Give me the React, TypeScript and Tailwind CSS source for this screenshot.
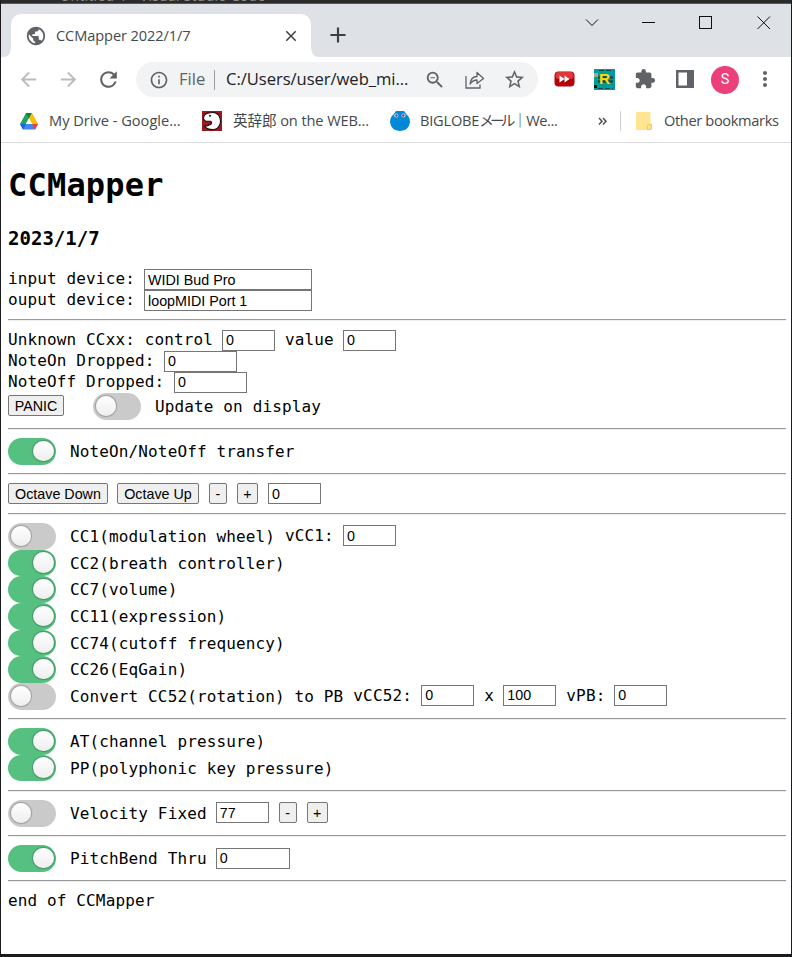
import type { ReactNode } from "react";
import {
  MdAdd,
  MdArrowBack,
  MdArrowForward,
  MdClose,
  MdExtension,
  MdInfoOutline,
  MdMoreVert,
  MdPublic,
  MdRefresh,
  MdStarBorder,
  MdZoomOut,
} from "react-icons/md";

const ui = "font-['Open_Sans','Noto_Sans_CJK_JP',sans-serif] whitespace-nowrap";

function Label({ children, className = "" }: { children: ReactNode; className?: string }) {
  return <span className={`shrink-0 whitespace-pre leading-[19px] ${className}`}>{children}</span>;
}

function Field({ value, className }: { value: string; className: string }) {
  return (
    <input
      readOnly
      value={value}
      className={`block h-[21px] shrink-0 border border-[#767676] bg-white pl-[3px] font-['Liberation_Sans',sans-serif] text-[14.3px] leading-[18px] tracking-normal text-black outline-none ${className}`}
    />
  );
}

function Button({ children, className }: { children: ReactNode; className: string }) {
  return (
    <button
      className={`block h-[21px] shrink-0 whitespace-nowrap rounded-[2px] border border-[#767676] bg-[#efefef] text-center font-['Liberation_Sans',sans-serif] text-[14.3px] leading-[20px] tracking-normal text-black ${className}`}
    >
      {children}
    </button>
  );
}

function Toggle({ on = false }: { on?: boolean }) {
  return (
    <span
      className={`flex h-[26.67px] w-[48px] shrink-0 items-center rounded-full px-[2.5px] ${
        on ? "justify-end bg-[#56c080]" : "justify-start bg-[#cacaca]"
      }`}
    >
      <span className="mb-px block size-[20.5px] rounded-full bg-gradient-to-b from-white to-[#eeeeee] shadow-[0_0_1px_1px_rgba(0,0,0,0.22)]" />
    </span>
  );
}

function Switch({ on, children, extra }: { on?: boolean; children: ReactNode; extra?: ReactNode }) {
  return (
    <div className="flex h-[26.67px] items-start">
      <Toggle on={on} />
      <Label className="ml-[14px] mt-1">{children}</Label>
      {extra}
    </div>
  );
}

function Rule() {
  return <div className="mb-2 mt-2 h-[2px] border-b border-t border-b-[#eeeeee] border-t-[#9a9a9a]" />;
}

function DriveIcon() {
  return (
    <svg width="18" height="17" viewBox="0 0 18 17">
      <path d="M6 0h6L3 16 0 11z" fill="#1fa463" />
      <path d="M6 0h6L9 5.5z" fill="#188038" />
      <path d="M12 0l6 11h-6L9 5.5z" fill="#fbbc04" />
      <path d="M0 11h18l-3 5.5H3z" fill="#4285f4" />
      <path d="M12 11h6l-3 5.5z" fill="#ea4335" />
      <path d="M0 11h6l-3 5.5z" fill="#1967d2" />
      <path d="M9 5.5L12 11H6z" fill="#fff" />
    </svg>
  );
}

function EijiroIcon() {
  return (
    <svg width="20" height="20" viewBox="0 0 20 20">
      <rect width="20" height="20" fill="#99191f" />
      <path
        d="M1.500 7Q2 2 8.500 1.700Q13 .800 16 3.500Q19 7 18.300 12Q17 18 11.500 18.500Q5.500 18.800 2.500 15.300Q6 15 9 13Q10.500 11.500 8.500 10.300L3.500 10Q1.500 9 1.500 7Z"
        fill="#fff"
        stroke="#111"
        strokeWidth="1.1"
      />
      <circle cx="8" cy="4.800" r="1" fill="#111" />
    </svg>
  );
}

function BiglobeIcon() {
  return (
    <svg width="20" height="20" viewBox="0 0 20 20">
      <path d="M6 0H14Q16 3 18.500 5.500Q20 8 20 11Q19 19.500 10 20Q1 19.500 0 11Q0 8 1.500 5.500Q4 3 6 0Z" fill="#0089d6" />
      <circle cx="6.300" cy="4.500" r="2" fill="#dceefa" />
      <circle cx="13.500" cy="4.500" r="2" fill="#dceefa" />
      <circle cx="6.500" cy="4.500" r="1.200" fill="#643c78" />
      <circle cx="13.300" cy="4.500" r="1.200" fill="#643c78" />
    </svg>
  );
}

function TabStrip() {
  return (
    <div className="flex h-[53px] bg-[#dee1e6] pl-[2px]">
      <svg className="mt-[43px] shrink-0" width="8" height="10" viewBox="0 0 8 10">
        <path d="M8 0Q8 10 0 10H8Z" fill="#fff" />
      </svg>
      <div className="mt-[10px] flex h-[43px] w-[300px] shrink-0 items-center rounded-t-[10px] bg-white pl-[14px]">
        <MdPublic className="size-[22px] shrink-0 text-[#5f6368]" />
        <span className={`${ui} ml-[9px] mt-px w-[226px] shrink-0 text-[14.6px] tracking-[-0.1px] text-[#45494d]`}>CCMapper 2022/1/7</span>
        <MdClose className="size-[18px] text-[#3c4043]" />
      </div>
      <svg className="mt-[43px] shrink-0" width="9" height="10" viewBox="0 0 9 10">
        <path d="M0 0Q0 10 9 10H0Z" fill="#fff" />
      </svg>
      <MdAdd className="ml-[5px] mt-[18px] size-[26px] text-[#3c4043]" />
      <svg className="ml-auto mr-[20px] mt-[12px]" width="186" height="14" viewBox="0 0 186 14" fill="none" stroke="#111">
        <path d="M1 3.5L7 9.5L13 3.5" />
        <path d="M57 6.5H70" />
        <rect x="114.5" y=".5" width="12" height="12" />
        <path d="M172.5 .5L185 13M185 .5L172.5 13" />
      </svg>
    </div>
  );
}

function Toolbar() {
  return (
    <div className="flex h-[44px] items-center bg-white pl-[16px]">
      <MdArrowBack className="size-[23px] shrink-0 text-[#babcbe]" />
      <MdArrowForward className="ml-[17px] size-[23px] shrink-0 text-[#babcbe]" />
      <MdRefresh className="ml-[16px] size-[25px] shrink-0 text-[#5f6368]" />
      <div className="ml-[15px] mt-px flex h-[35px] w-[402px] shrink-0 items-center rounded-full bg-[#f1f3f4] pl-[13px]">
        <MdInfoOutline className="size-[20px] shrink-0 text-[#5f6368]" />
        <span className={`${ui} ml-[10px] w-[34px] shrink-0 text-[16.6px] text-[#5f6368]`}>File</span>
        <span className="ml-px h-[20px] w-px shrink-0 bg-[#9aa0a6]" />
        <span className={`${ui} ml-[11px] w-[198px] shrink-0 text-[16.6px] tracking-[-0.05px] text-[#202124]`}>C:/Users/user/web_mi...</span>
        <MdZoomOut className="size-[22px] shrink-0 text-[#5f6368]" />
        <svg className="ml-[19px] shrink-0" width="20" height="18" viewBox="0 0 20 18" fill="none" stroke="#5f6368" strokeWidth="1.3">
          <path d="M1 5V17H15V13.5" />
          <path d="M5 13Q6 5.500 12 5.500V1.500L18.500 7.500L12 12.500V9Q8 9 5 13Z" strokeLinejoin="round" />
        </svg>
        <MdStarBorder className="ml-[18px] size-[23px] shrink-0 text-[#5f6368]" />
      </div>
      <svg className="ml-[16px] shrink-0" width="21" height="16" viewBox="0 0 20 16">
        <rect y=".5" width="20" height="15" rx="4" fill="#b50008" />
        <rect x="1" y="1" width="18" height="7" rx="3" fill="#e0363a" />
        <path d="M5 4.500L10 8L5 11.500ZM10 4.500L15 8L10 11.500Z" fill="#fff" />
      </svg>
      <div className="ml-[19px] grid size-[21px] shrink-0 place-items-center">
        <svg className="col-start-1 row-start-1" width="21" height="21" viewBox="0 0 21 21">
          <rect width="21" height="21" fill="#009c9c" />
          <path d="M5 1.500H19M4 19.500H19" stroke="#154b50" strokeDasharray="5 2" />
          <path d="M4 8.500H19M4 12.500H19" stroke="#154b50" strokeWidth="2.500" />
          <rect y="4" width="4" height="4" fill="#9da5a5" />
          <rect y="16" width="3" height="3" fill="#111" />
        </svg>
        <span className="col-start-1 row-start-1 font-['Liberation_Sans',sans-serif] text-[15.5px] font-bold leading-[20px] text-[#ffdc00]">R</span>
      </div>
      <MdExtension className="ml-[19px] size-[22px] shrink-0 text-[#5f6368]" />
      <svg className="ml-[20px] shrink-0" width="18" height="18" viewBox="0 0 18 18">
        <path fillRule="evenodd" d="M0 0H18V18H0ZM2.500 2.500V15.500H11V2.500Z" fill="#5f6368" />
      </svg>
      <span className="ml-[17px] mt-px flex size-[28px] shrink-0 items-center justify-center rounded-full bg-[#ec407a] font-[Roboto,sans-serif] text-[14.5px] text-white">S</span>
      <MdMoreVert className="ml-[14px] size-[24px] shrink-0 text-[#5f6368]" />
    </div>
  );
}

function Bookmarks() {
  return (
    <div className={`${ui} flex h-[42px] items-center border-b border-[#dcdcde] bg-white pb-px pl-[19px] text-[14.6px] text-[#45494d]`}>
      <span className="flex w-[29px] shrink-0"><DriveIcon /></span>
      <span className="w-[153px] shrink-0">My Drive - Google...</span>
      <span className="flex w-[31px] shrink-0"><EijiroIcon /></span>
      <span className="w-[157px] shrink-0 tracking-[-0.1px]">英辞郎 on the WEB...</span>
      <span className="flex w-[30px] shrink-0"><BiglobeIcon /></span>
      <span className="flex w-[178px] shrink-0">
        <span className="tracking-[-0.2px]">BIGLOBE</span>
        <span className="tracking-[-3.8px]">メール</span>
        <span className="ml-px tracking-[-1px]">｜</span>
        <span className="tracking-[-0.4px]">We...</span>
      </span>
      <svg width="10" height="9" viewBox="0 0 10 9" fill="none" stroke="#4b4f53" strokeWidth="1.5">
        <path d="M1 1L4 4.200L1 7.500M5 1L8 4.200L5 7.500" />
      </svg>
      <span className="ml-[12px] h-[20px] w-px bg-[#cdcfd2]" />
      <svg className="ml-[15px] shrink-0" width="16" height="18" viewBox="0 0 16 18">
        <path d="M1.500 0H13.500Q14.500 0 14.500 1V11L16 12.500V16Q16 18 14 18H1.500Q0 18 0 16.500V1.500Q0 0 1.500 0Z" fill="#fee592" />
        <path d="M11.500 17.500V14Q11.500 12.500 13 12.500H15.500V16Q15.500 17.500 14 17.500Z" fill="#ffe28a" stroke="#efcb55" />
      </svg>
      <span className="ml-[12px] shrink-0 tracking-[-0.35px]">Other bookmarks</span>
    </div>
  );
}

export default function App() {
  return (
    <div className="h-[957px] w-[792px] overflow-hidden border-b-[3px] border-l border-r border-[#1b1b1d] bg-white">
      <div className="flex h-[4px] items-end overflow-hidden border-b border-[#55585b] bg-[#2b2b2b] pl-[59px]">
        <span className={`${ui} text-[14px] leading-[14px] tracking-[0.25px] text-[#8b8b8b]`}>Untitled-1 - Visual Studio Code</span>
      </div>
      <TabStrip />
      <Toolbar />
      <Bookmarks />
      <main className="pl-[7px] pr-[5px] font-['DejaVu_Sans_Mono',monospace] text-[16px] tracking-[0.13px] text-black">
        <h1 className="h-[82px] pt-[22px] text-[32px] font-bold leading-[40px] tracking-[0.2px]">CCMapper</h1>
        <h3 className="h-[44px] text-[19px] font-bold leading-[26px] tracking-[0.02px]">2023/1/7</h3>
        <div className="flex h-[21px]">
          <Label className="w-[136px]">input device:</Label>
          <Field value="WIDI Bud Pro" className="w-[168px]" />
        </div>
        <div className="flex h-[21px]">
          <Label className="w-[136px]">ouput device:</Label>
          <Field value="loopMIDI Port 1" className="w-[168px]" />
        </div>
        <Rule />
        <div className="mt-[9px] flex h-[21px]">
          <Label className="w-[214px]">Unknown CCxx: control</Label>
          <Field value="0" className="w-[53px] pb-px" />
          <Label className="ml-[10px] w-[58px]">value</Label>
          <Field value="0" className="w-[53px] pb-px" />
        </div>
        <div className="flex h-[21px]">
          <Label className="w-[156px]">NoteOn Dropped:</Label>
          <Field value="0" className="w-[73px] pb-px" />
        </div>
        <div className="flex h-[21px]">
          <Label className="w-[166px]">NoteOff Dropped:</Label>
          <Field value="0" className="w-[73px] pb-px" />
        </div>
        <div className="flex h-[27px]">
          <Button className="mr-[29px] mt-[2px] w-[56px] pb-px">PANIC</Button>
          <Switch>Update on display</Switch>
        </div>
        <Rule />
        <div className="h-[27px]">
          <Switch on>NoteOn/NoteOff transfer</Switch>
        </div>
        <Rule />
        <div className="flex h-[22px]">
          <Button className="w-[100px]">Octave Down</Button>
          <Button className="ml-[9px] w-[82px]">Octave Up</Button>
          <Button className="ml-[10px] w-[18px]">-</Button>
          <Button className="ml-[10px] w-[21px]">+</Button>
          <Field value="0" className="ml-[10px] w-[53px]" />
        </div>
        <Rule />
        <div className="h-[187px]">
          <Switch
            extra={
              <>
                <Label className="ml-[10px] mt-[3px] w-[58px]">vCC1:</Label>
                <Field value="0" className="mt-[2px] w-[53px]" />
              </>
            }
          >
            CC1(modulation wheel)
          </Switch>
          <Switch on>CC2(breath controller)</Switch>
          <Switch on>CC7(volume)</Switch>
          <Switch on>CC11(expression)</Switch>
          <Switch on>CC74(cutoff frequency)</Switch>
          <Switch on>CC26(EqGain)</Switch>
          <Switch
            extra={
              <>
                <Label className="ml-[10px] mt-[3px] w-[68px]">vCC52:</Label>
                <Field value="0" className="mt-[2px] w-[53px]" />
                <Label className="ml-[10px] mt-[3px] w-[19px]">x</Label>
                <Field value="100" className="mt-[2px] w-[53px]" />
                <Label className="ml-[10px] mt-[3px] w-[48px]">vPB:</Label>
                <Field value="0" className="mt-[2px] w-[53px]" />
              </>
            }
          >
            Convert CC52(rotation) to PB
          </Switch>
        </div>
        <Rule />
        <div className="h-[54px]">
          <Switch on>AT(channel pressure)</Switch>
          <Switch on>PP(polyphonic key pressure)</Switch>
        </div>
        <Rule />
        <div className="h-[27px]">
          <Switch
            extra={
              <>
                <Field value="77" className="ml-[9px] mt-[2px] w-[53px]" />
                <Button className="ml-[10px] mt-[2px] w-[18px]">-</Button>
                <Button className="ml-[10px] mt-[2px] w-[21px]">+</Button>
              </>
            }
          >
            Velocity Fixed
          </Switch>
        </div>
        <Rule />
        <div className="h-[27px]">
          <Switch on extra={<Field value="0" className="ml-[9px] mt-[3px] w-[74px] pb-px" />}>PitchBend Thru</Switch>
        </div>
        <Rule />
        <Label className="mt-[9px] block">end of CCMapper</Label>
      </main>
    </div>
  );
}
